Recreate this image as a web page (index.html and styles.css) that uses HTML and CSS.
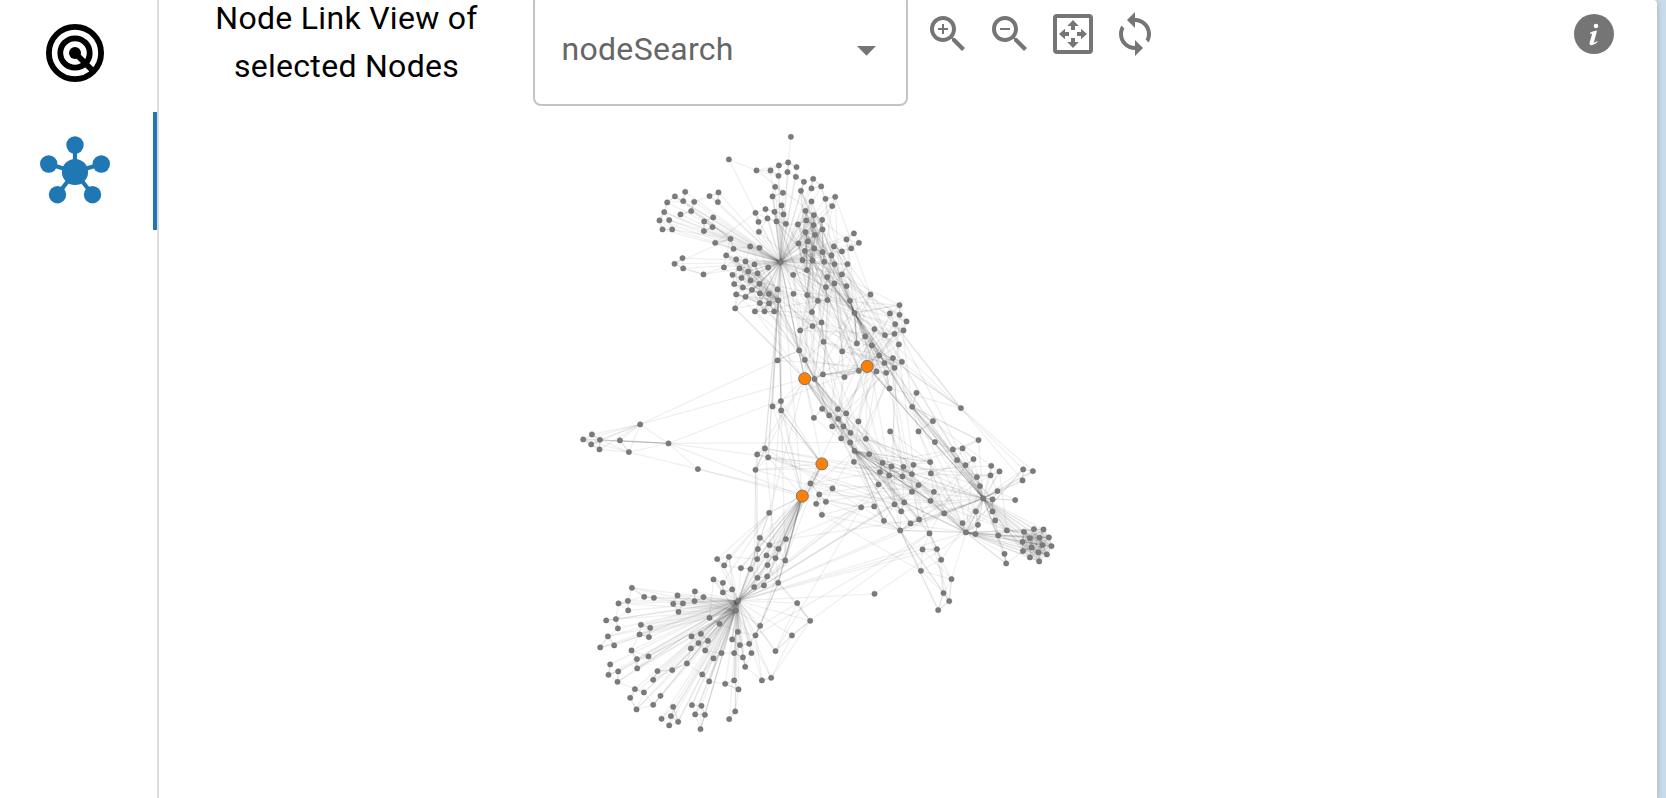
FILE: index.html
```
<!DOCTYPE html>
<html lang="en">
<head>
<meta charset="utf-8">
<title>Node Link View</title>
<link rel="stylesheet" href="styles.css">
</head>
<body>
<div class="app">
  <nav class="tabs">
    <div class="tab">
      <svg class="tab-icon" viewBox="-36 -36 72 72" fill="none" stroke="#000" stroke-width="5.8">
        <circle r="26.1"/><circle r="14.7"/><path d="M0 0L18 18"/><circle r="6" fill="#000" stroke="none"/>
      </svg>
    </div>
    <div class="tab tab-active">
      <svg class="tab-icon" viewBox="-36 -36 72 72" fill="#1f77b4" stroke="#1f77b4" stroke-width="4.2">
        <path d="M0 0V-26M0 0L-26.3-8M0 0L26.3-8M0 0L-17.5 22.5M0 0L17.5 22.5"/>
        <g stroke="none"><circle r="13.1"/><circle cy="-27" r="8.7"/><circle cx="-26.3" cy="-8" r="8.7"/><circle cx="26.3" cy="-8" r="8.7"/><circle cx="-17.5" cy="22.7" r="8.7"/><circle cx="17.5" cy="22.7" r="8.7"/></g>
      </svg>
    </div>
  </nav>
  <main class="panel">
    <header class="toolbar">
      <h1 class="title">Node Link View of selected Nodes</h1>
      <div class="select"><span>nodeSearch</span><svg class="caret" viewBox="0 0 19 10"><path d="M0 0H19L9.5 9.7Z"/></svg></div>
      <div class="actions">
        <svg class="action" viewBox="0 0 24 24"><path d="M15.5 14L20.5 19L19 20.5L14 15.5V14.71L13.73 14.43C12.59 15.41 11.11 16 9.5 16A6.5 6.5 0 0 1 3 9.5A6.5 6.5 0 0 1 9.5 3A6.5 6.5 0 0 1 16 9.5C16 11.11 15.41 12.59 14.43 13.73L14.71 14H15.5M9.5 14C12 14 14 12 14 9.5S12 5 9.5 5 5 7 5 9.5 7 14 9.5 14M12 10H10V12H9V10H7V9H9V7H10V9H12V10Z"/></svg>
        <svg class="action" viewBox="0 0 24 24"><path d="M15.5 14L20.5 19L19 20.5L14 15.5V14.71L13.73 14.43C12.59 15.41 11.11 16 9.5 16A6.5 6.5 0 0 1 3 9.5A6.5 6.5 0 0 1 9.5 3A6.5 6.5 0 0 1 16 9.5C16 11.11 15.41 12.59 14.43 13.73L14.71 14H15.5M9.5 14C12 14 14 12 14 9.5S12 5 9.5 5 5 7 5 9.5 7 14 9.5 14M7 9H12V10H7Z"/></svg>
        <svg class="action" viewBox="0 0 24 24"><path fill-rule="evenodd" d="M4 2H20A2 2 0 0 1 22 4V20A2 2 0 0 1 20 22H4A2 2 0 0 1 2 20V4A2 2 0 0 1 4 2M4 4V20H20V4ZM12 5L14.9 8H13V10H11V8H9.1ZM12 19L9.1 16H11V14H13V16H14.9ZM5 12L8 9.4V11H10V13H8V14.6ZM19 12L16 14.6V13H14V11H16V9.4Z"/></svg>
        <svg class="action" viewBox="0 0 24 24"><path d="M12 4V1L8 5l4 4V6c3.31 0 6 2.69 6 6 0 1.01-.25 1.97-.7 2.8l1.46 1.46C19.54 15.03 20 13.57 20 12c0-4.42-3.58-8-8-8zm0 14c-3.31 0-6-2.69-6-6 0-1.01.25-1.97.7-2.8L5.24 7.74C4.46 8.97 4 10.43 4 12c0 4.42 3.58 8 8 8v3l4-4-4-4v3z"/></svg>
      </div>
      <svg class="info" viewBox="0 0 40 40">
        <circle class="info-disc" cx="20" cy="20" r="20"/>
        <circle cx="22" cy="12" r="2.3"/>
        <path d="M15.9 18.8Q19.5 16.8 23.1 16.5L19.9 28.2Q19.6 29.6 23 27.1L23.6 28Q20.4 31.2 17.6 31.3Q14.9 31 15.7 28.2L18 20.3Q18 19 16.2 19.9Z"/>
      </svg>
    </header>
    <svg class="graph" id="graph" viewBox="159 110 1498 688"></svg>
  </main>
</div>
<script src="graph.js"></script>
</body>
</html>
```
FILE: styles.css
```
* { box-sizing: border-box; }
body { margin: 0; height: 798px; overflow: hidden; background: #c7dbe8; font-family: Roboto, sans-serif; }
.app { display: flex; width: 1657px; height: 798px; background: #fff; border-top-right-radius: 4px; box-shadow: 0 2px 6px rgba(0,0,0,.2); }
.tabs { width: 159px; flex: none; border-right: 2px solid #ddd; }
.tab { height: 118px; display: flex; justify-content: center; padding: 22.7px 7px 0 0; }
.tab:first-child { height: 112px; padding-top: 16.7px; }
.tab-active { border-right: 4px solid #1f77b4; padding-right: 3px; padding-top: 23.7px; }
.tab-icon { width: 72px; height: 72px; flex: none; }
.panel { flex: 1; display: flex; flex-direction: column; min-width: 0; }
.toolbar { height: 110px; display: flex; align-items: flex-start; flex: none; padding-right: 43px; }
.title { margin: -6px 0 0 37px; width: 301px; flex: none; font-weight: 400; font-size: 32px; line-height: 48px; letter-spacing: .3px; text-align: center; color: #000; }
.select { margin: -6px 0 0 36px; width: 374.5px; flex: none; height: 112px; border: 2px solid #c4c4c4; border-radius: 8px; display: flex; align-items: center; justify-content: space-between; padding: 0 30px 2px 26.5px; font-size: 32px; letter-spacing: .3px; color: #666; }
.caret { width: 19px; height: 10px; margin-top: 4px; fill: #757575; }
.actions { display: flex; flex: none; gap: 14.3px; margin: 10px 0 0 16.5px; }
.action { width: 48px; height: 48px; fill: #757575; }
.info { margin: 14px 0 0 auto; width: 40px; height: 40px; fill: #fff; }
.info-disc { fill: #757575; }
.graph { width: 1498px; height: 688px; flex: none; display: block; }
.links { stroke: #000; stroke-opacity: .062; stroke-width: 1.25; fill: none; }
.nodes { fill: #7b7b7b; stroke: #6c6c6c; stroke-width: .5; }
.selected { fill: #ff8000; stroke: #777; stroke-width: 1; }
```
FILE: graph.js
```
// Node positions, grouped; each group has an origin and offsets in thirds of a pixel.
const groups = {
  nw: [640, 120, "135,215 104,229 81,247 129,243 162,245 72,276 121,283 153,273 58,301 87,300 67,328 96,328 127,414 103,431 129,445"],
  north: [700, 120, "272,50 86,118 169,151 211,151 236,136 264,127 289,141 262,156 235,167 287,170 311,185 339,176 225,200 248,218 217,229 302,212 334,205 363,199 376,236 405,230 396,258 334,244 55,217 28,228 53,246 244,256 166,278 196,267 223,275 250,283 202,295 175,305 229,304 257,311 176,335 293,313 316,272 341,285 318,301 366,299 340,315 316,336 367,328 344,344 323,364 295,370 39,292 12,304 37,321 11,333 91,356 45,368 100,386 150,379 178,383 78,406 108,418 136,424 163,433 71,442 118,445 144,454 172,460 204,442 97,464 124,473 151,481 178,491 102,492 128,502 155,509 232,508 108,523 136,530 179,520 206,521 234,541 179,549 207,550 105,565 164,574 193,574 222,574 10,463 241,426 279,464 280,521 321,525 320,450 307,420 337,421 314,392 342,385 367,396 401,379 394,406 372,425 403,432 442,432 425,394 453,385 439,358 461,340 476,368 425,463 381,471 403,490 377,501 439,498 353,542 382,540 335,576 449,542 511,523 463,578 569,580 598,555 598,584"],
  mid: [740, 300, "217,78 244,67 180,91 250,125 177,151 194,179 112,181 306,154 350,130 375,109 395,136 403,87 434,105 463,101 465,72 499,64 490,91 476,133 417,166 458,174 433,189 485,185 463,203 438,218 409,214 356,212 313,231 248,223 223,237 448,265 529,278 516,320 578,363 450,394 535,394 584,426 122,303 97,319 123,331 246,326 293,327 318,340 267,346 294,356 221,353 276,379 310,379 355,364 331,398 303,415 330,427 377,416 343,452 387,462 341,485 74,445 51,463 84,472 46,509 211,550 277,565 237,583"],
  south: [740, 400, "228,311 257,305 245,344 87,338 59,413 88,435 53,447 115,446 137,417 79,466 51,477 106,474 82,495 135,481 31,507 2,504 52,533 81,529 42,561 71,556 114,548 403,581"],
  east: [860, 400, "302,24 67,188 94,199 59,216 87,226 130,200 160,194 127,229 155,222 210,186 212,220 175,255 55,253 155,275 221,275 211,302 103,313 132,307 42,319 3,322 123,334 71,362 252,340 177,358 151,370 120,391 208,400 187,448 230,447 243,479 182,512 274,537 250,579 267,603 234,630 355,120 278,148 307,145 291,180 340,177 316,195 393,197 418,214 391,226 350,231 489,208 518,213 487,241 359,258 412,273 465,300 369,295 397,298 347,334 397,334 405,361 307,369 353,374 317,397 346,402 414,406 440,391 433,461 438,490"],
  pod: [860, 400, "491,395 521,387 550,388 509,414 538,413 566,412 487,425 547,435 574,438 514,442 488,453 535,457 560,463 509,472 537,484"],
  west: [570, 400, "210,73 65,103 39,118 89,119 149,121 63,133 88,148 176,156 295,130 383,207"],
  fan: [590, 500, "381,177 416,170 402,196 370,238 398,248 398,277 426,268 125,263 162,290 191,293 113,302 85,310 114,331 262,286 314,274 340,291 313,303 249,311 278,310 265,335 444,302 437,331 48,361 77,357 83,385 152,374 180,383 148,403 176,411 53,409 72,436 30,442 124,451 175,469 140,477 141,505 60,493 84,514 55,524 82,545 202,513 246,510 189,539 290,490 134,567 161,577 120,593 139,628 211,587 189,614 249,620 242,648 214,656 264,665 237,676 305,615 334,617 315,643 344,644 331,687 358,353 388,371 332,401 304,409 325,429 353,422 302,445 345,451 336,523 357,544 370,475 394,459 443,395 426,418 449,435 477,431 432,459 458,472 484,459 465,500 405,551 432,541 445,568 435,634 417,657 510,377 496,406 621,309 660,362 605,406 556,453 543,533 515,541"]
};
const g = {};
for (const [name, [ox, oy, list]] of Object.entries(groups))
  g[name] = list.split(" ").map(p => { const [x, y] = p.split(",").map(Number); return [ox + x / 3 + .2, oy + y / 3 + .1]; });
const all = Object.values(g).flat();
const picked = [[804.7, 378.7], [867.2, 366.4], [821.9, 463.9], [802.3, 496.1]];
const links = [];
const link = (a, b) => links.push([a, b]);
const dist = (a, b) => Math.hypot(a[0] - b[0], a[1] - b[1]);
const snap = (x, y) => all.concat(picked).reduce((m, n) => dist(n, [x, y]) < dist(m, [x, y]) ? n : m);
const box = (x0, y0, x1, y1) => all.filter(([x, y]) => x >= x0 && x < x1 && y >= y0 && y < y1);

const crown = snap(780, 262), root = snap(738, 601), right = snap(983, 498), low = snap(966, 532);
const core = snap(854, 451), bend = snap(854, 313), knee = snap(912, 407), inner = snap(778, 300);
const [o1, o2, o3, o4] = picked;

// Hub spokes
g.nw.forEach((n, i) => { link(n, crown); if (i % 2) link(n, snap(730, 239)); });
g.north.forEach(n => { if (n[0] < 862 && n[1] > 163 && !(n[0] < 760 && n[1] < 175)) link(n, crown); });
link(snap(791, 137), crown);
g.fan.forEach((n, i) => { if (!(n[0] > 770 && n[1] < 640)) { link(n, root); if (i % 2) link(n, snap(736, 610)); } });
box(738, 510, 795, 595).forEach(n => { link(n, root); link(n, o4); });
g.pod.forEach((n, i) => { link(n, right); link(n, low); g.pod.slice(i + 1).forEach(m => link(n, m)); });
box(940, 440, 1035, 570).forEach((n, i) => { if (!g.pod.includes(n)) link(n, right); if (i % 3 === 0) link(n, low); });
box(850, 315, 910, 375).forEach((n, i) => { link(n, o2); if (i % 2 === 0) link(n, bend); });
box(810, 400, 858, 455).forEach((n, i) => { link(n, core); if (i % 2) link(n, o1); });
box(870, 455, 940, 535).forEach((n, i) => { link(n, i % 3 === 0 ? right : core); if (i % 3 === 1) link(n, low); });
box(725, 245, 782, 315).forEach(n => link(n, inner));
box(795, 205, 830, 270).forEach((n, i, a) => { link(n, a[(i * 5 + 3) % a.length]); link(n, a[(i * 7 + 1) % a.length]); });

// Short links between neighbours
all.forEach((n, i) => {
  all.filter(m => m !== n && dist(m, n) < 24).sort((a, b) => dist(a, n) - dist(b, n)).slice(0, 1 + i % 3).forEach(m => link(n, m));
});

// Bundles between regions, spread by a fixed pseudo-random sequence
let seed = 7;
const pick = list => { seed = (seed * 1103515 + 12345) % 2147483647; return list[Math.floor(seed / 2147483647 * list.length)]; };
const bundle = (A, B, count) => { for (let i = 0; i < count; i++) link(pick(A), pick(B)); };
const northEast = box(795, 190, 855, 300), mount = box(850, 290, 910, 375), spine = box(815, 400, 870, 465);
const east = box(875, 450, 940, 540), far = box(940, 440, 1010, 540), shaft = box(738, 510, 795, 590);
const west = box(725, 250, 785, 315), waist = box(790, 300, 850, 380), clump = box(798, 205, 826, 265);
bundle(northEast, [bend, ...mount], 26);
bundle(northEast, [bend], 12);
bundle(box(745, 160, 835, 260), [bend], 10);
bundle(box(770, 190, 850, 300), [o1, o2, ...waist], 38);
bundle(west, west, 33);
bundle(west, [o1, ...waist], 22);
bundle(waist, [crown, ...mount, bend], 28);
bundle(clump, [...clump, snap(804, 270), snap(807, 295)], 34);
bundle(waist, spine, 12);
bundle([bend], [o2, knee, ...mount], 12);
bundle([crown, inner], [o1, snap(799, 350), snap(805, 360), ...box(770, 400, 790, 415)], 10);
bundle([o1, snap(814, 379)], spine, 15);
bundle([o2, bend], [knee, snap(889, 388), snap(933, 421), right], 8);
bundle(mount, [knee, right, snap(961, 408)], 12);
bundle([knee], far, 10);
bundle([core], east, 12);
bundle(spine, east, 24);
bundle(east, far, 22);
bundle(east, [low, right, core], 15);
bundle([o2, ...mount], [core, ...spine, ...east], 20);
bundle([o3, o4], [...shaft, core], 16);
bundle([root], [core, ...east], 6);
bundle(box(755, 395, 790, 475), [crown, inner, o3, o4, o1, snap(768, 513)], 14);
bundle(box(755, 395, 790, 475), shaft, 4);
bundle(box(750, 440, 840, 520), [o4, ...east], 16);
bundle(g.pod, [snap(1007, 530), snap(998, 535)], 7);

// Individual long links
const long = "640,425 777,360|640,425 804,379|669,443 867,366|669,443 854,439|669,443 802,496|669,443 821,464|640,425 669,443|640,425 600,440|640,425 583,439|640,425 591,434|640,425 599,449|640,425 620,440|640,425 591,444|640,425 629,452|669,443 583,439|669,443 583,439|669,443 600,440|669,443 600,440|669,443 620,440|669,443 629,452|669,443 698,469|629,452 600,440|629,452 583,439|629,452 599,449|698,469 629,452|698,469 861,507|698,469 802,496|729,159 756,170|729,159 755,212|756,170 850,240|715,242 755,212|735,308 804,379|777,360 867,366|804,379 867,366|804,379 867,366|804,379 756,454|804,379 768,513|867,366 802,496|870,294 961,408|870,294 855,313|961,408 1033,471|961,408 1023,469|961,408 1023,480|889,388 961,408|912,407 918,431|912,407 933,421|912,407 978,440|918,431 966,532|918,431 931,462|890,431 910,480|890,431 931,462|890,431 912,492|867,366 868,439|867,366 854,451|1022,480 983,498|1033,471 983,498|1023,469 966,532|1005,554 966,532|1006,563 966,532|1004,553 983,498|900,530 938,610|900,530 938,610|900,530 949,601|937,549 943,593|922,549 951,579|922,571 951,579|922,571 943,593|941,560 943,593|966,532 951,579|951,579 949,601|943,593 938,610|910,480 949,601|900,530 922,571|900,530 821,515|900,530 943,593|821,515 922,571|890,431 943,560|874,594 738,601|874,594 966,532|738,601 966,532|738,601 983,498|738,601 937,549|738,601 861,507|738,601 922,549|764,651 860,507|764,651 797,603|797,603 738,601|810,621 738,601|792,636 738,601|760,625 802,496|755,635 778,583|755,635 778,583|738,601 775,651|771,678 792,636|762,680 755,635|755,635 928,533|785,543 928,519|785,543 861,507|810,621 930,533|778,583 797,603|778,583 810,621|769,513 730,556|769,513 738,601|769,513 724,566|754,560 728,559|723,579 769,513|797,603 760,626|708,650 738,601|714,566 769,513|711,579 709,618|778,583 760,626|771,678 810,621|760,470 750,560|748,465 746,580|1020,500 983,498|1015,530 1000,471|1005,554 1006,563|867,366 955,462|867,366 983,498|912,407 983,498|854,313 912,407|780,262 802,496|780,262 821,464|786,410 821,464|778,406 821,464|821,464 756,470|821,464 983,498|832,488 854,451|802,496 854,451|802,496 861,507|821,464 738,601";
long.split("|").forEach(s => { const [a, b] = s.split(" ").map(p => p.split(",").map(Number)); link(snap(...a), snap(...b)); });

const f = v => v.toFixed(1);
document.getElementById("graph").innerHTML =
  `<g class="links">${links.map(([a, b]) => `<path d="M${f(a[0])} ${f(a[1])}L${f(b[0])} ${f(b[1])}"/>`).join("")}</g>` +
  `<g class="nodes">${all.map(n => `<circle cx="${f(n[0])}" cy="${f(n[1])}" r="2.65"/>`).join("")}</g>` +
  `<g class="selected">${picked.map(n => `<circle cx="${n[0]}" cy="${n[1]}" r="6"/>`).join("")}</g>`;
```
